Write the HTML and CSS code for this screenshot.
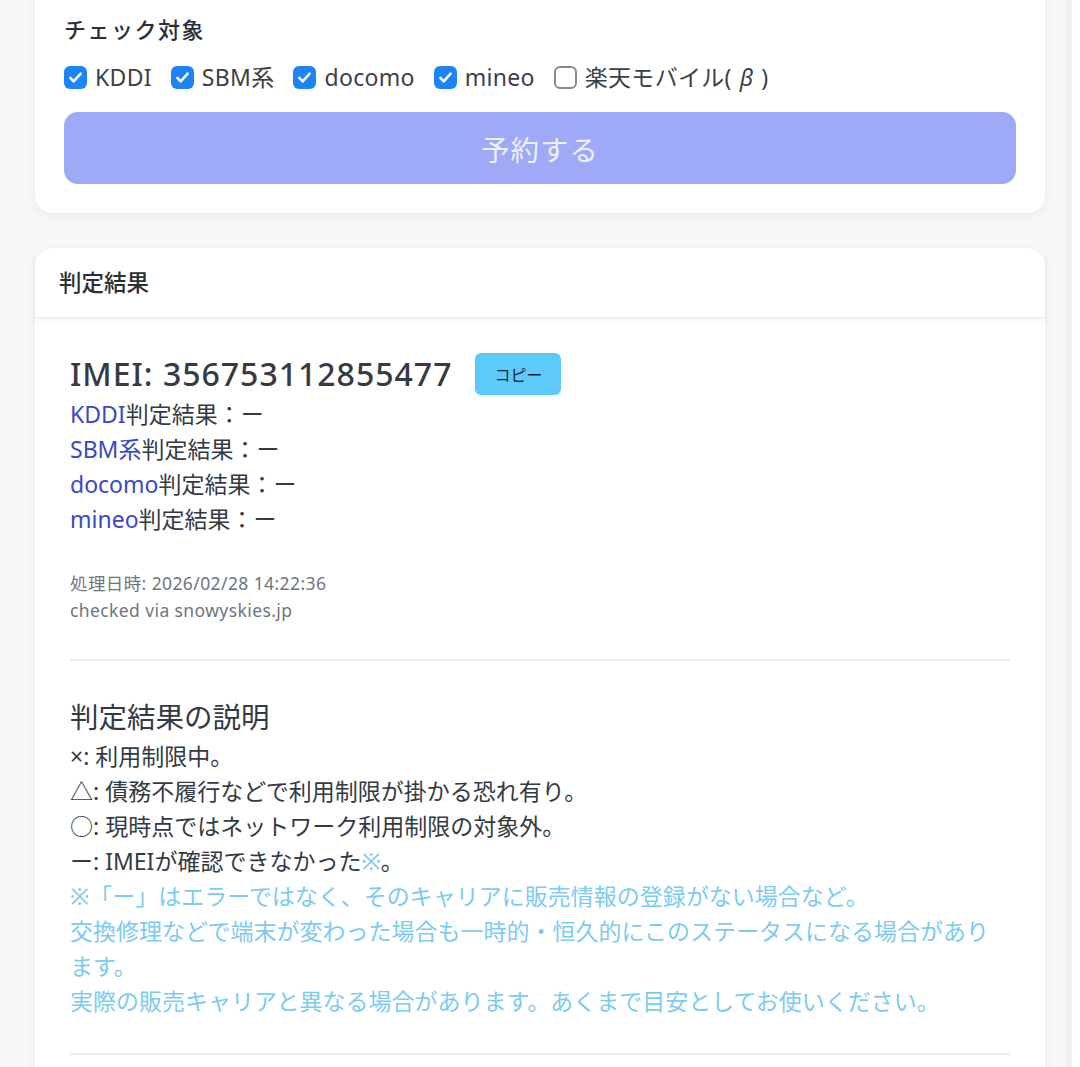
FILE: index.html
```html
<!DOCTYPE html>
<html lang="ja">
<head>
<meta charset="utf-8">
<title>判定結果</title>
<link rel="stylesheet" href="styles.css">
</head>
<body>
<div class="page">
  <section class="card card-form">
    <div class="form-label">チェック対象</div>
    <div class="checks">
      <label class="check"><span class="box on"><svg viewBox="0 0 24 24" width="19" height="19"><path d="M5.5 12.5l4.2 4.3 8.8-9.6" fill="none" stroke="#fff" stroke-width="3.2" stroke-linecap="round" stroke-linejoin="round"/></svg></span>KDDI</label>
      <label class="check"><span class="box on"><svg viewBox="0 0 24 24" width="19" height="19"><path d="M5.5 12.5l4.2 4.3 8.8-9.6" fill="none" stroke="#fff" stroke-width="3.2" stroke-linecap="round" stroke-linejoin="round"/></svg></span>SBM系</label>
      <label class="check"><span class="box on"><svg viewBox="0 0 24 24" width="19" height="19"><path d="M5.5 12.5l4.2 4.3 8.8-9.6" fill="none" stroke="#fff" stroke-width="3.2" stroke-linecap="round" stroke-linejoin="round"/></svg></span>docomo</label>
      <label class="check"><span class="box on"><svg viewBox="0 0 24 24" width="19" height="19"><path d="M5.5 12.5l4.2 4.3 8.8-9.6" fill="none" stroke="#fff" stroke-width="3.2" stroke-linecap="round" stroke-linejoin="round"/></svg></span>mineo</label>
      <label class="check"><span class="box off"></span>楽天モバイル(<i class="beta">β</i>)</label>
    </div>
    <button class="submit" type="button">予約する</button>
  </section>

  <section class="card card-result">
    <header class="card-header">判定結果</header>
    <div class="card-body">
      <div class="imei-row">
        <span class="imei">IMEI: 356753112855477</span>
        <button class="copy" type="button">コピー</button>
      </div>
      <div class="result"><a class="carrier">KDDI</a>判定結果：ー</div>
      <div class="result"><a class="carrier">SBM系</a>判定結果：ー</div>
      <div class="result"><a class="carrier">docomo</a>判定結果：ー</div>
      <div class="result"><a class="carrier">mineo</a>判定結果：ー</div>
      <div class="meta">
        <div>処理日時: 2026/02/28 14:22:36</div>
        <div>checked via snowyskies.jp</div>
      </div>
      <hr class="divider">
      <h2 class="explain-title">判定結果の説明</h2>
      <div class="explain">
        <div>×: 利用制限中。</div>
        <div>△: 債務不履行などで利用制限が掛かる恐れ有り。</div>
        <div>○: 現時点ではネットワーク利用制限の対象外。</div>
        <div>ー: IMEIが確認できなかった<span class="note">※</span>。</div>
        <div class="note">※「ー」はエラーではなく、そのキャリアに販売情報の登録がない場合など。</div>
        <div class="note">交換修理などで端末が変わった場合も一時的・恒久的にこのステータスになる場合があります。</div>
        <div class="note">実際の販売キャリアと異なる場合があります。あくまで目安としてお使いください。</div>
      </div>
      <hr class="divider divider-end">
    </div>
  </section>
</div>
</body>
</html>
```

FILE: styles.css
```css
* { box-sizing: border-box; }
html, body {
  margin: 0;
  padding: 0;
  background: #ffffff;
  height: 100%;
  overflow: hidden;
}
body {
  font-family: "Noto Sans", "Noto Sans CJK JP", sans-serif;
  color: #333a44;
  font-size: 23px;
  line-height: 1.5;
}
.page {
  width: 1072px;
  min-height: 1067px;
  background: #f7f7f8;
  padding: 0 27px 0 35px;
  border-right: 6px solid #f1f1f2;
}
.card {
  width: 1010px;
  background: #fff;
  border-radius: 18px;
  box-shadow: 0 2px 10px rgba(0, 0, 0, 0.06);
}
.card-form {
  margin-top: -16px;
  padding: 28px 29px 29px;
}
.form-label {
  font-weight: 500;
  font-size: 22px;
  color: #2b2f36;
  line-height: 35px;
  letter-spacing: 1.5px;
}
.checks {
  display: flex;
  align-items: center;
  gap: 19px;
  margin-top: 13px;
  line-height: 35px;
}
.check {
  display: flex;
  align-items: center;
  gap: 8px;
  color: #3a3f48;
  font-size: 23px;
  letter-spacing: 0.3px;
}
.box {
  width: 23px;
  height: 23px;
  border-radius: 6px;
  display: flex;
  align-items: center;
  justify-content: center;
  flex: none;
}
.box.on { background: #1e84f5; }
.box.off {
  border: 2px solid #8a8a8e;
  background: #fff;
}
.beta { font-style: italic; }
.submit {
  display: block;
  width: 100%;
  height: 72px;
  margin-top: 17px;
  border: none;
  border-radius: 14px;
  background: #9ea9f8;
  color: #eef0fe;
  font-family: "Noto Sans CJK JP", sans-serif;
  font-size: 28.5px;
  letter-spacing: 1px;
}
.card-result {
  margin-top: 35px;
  border-radius: 18px 18px 0 0;
  min-height: 900px;
}
.card-header {
  height: 70px;
  padding: 1px 24px 0;
  display: flex;
  align-items: center;
  font-size: 22.5px;
  font-weight: 500;
  color: #2b2f36;
  border-bottom: 1px solid #ececee;
  box-shadow: 0 3px 6px rgba(0, 0, 0, 0.05);
  position: relative;
}
.card-body {
  padding: 33px 35px 0;
}
.imei-row {
  display: flex;
  align-items: center;
  gap: 23px;
  height: 46px;
}
.imei {
  font-size: 32px;
  font-weight: 500;
  color: #353a44;
  letter-spacing: 1px;
}
.copy {
  width: 86px;
  height: 42px;
  border: none;
  border-radius: 6px;
  background: #5ccbfa;
  color: #1d2430;
  font-family: "Noto Sans CJK JP", sans-serif;
  font-size: 16px;
}
.result {
  line-height: 35px;
  color: #333a44;
}
.carrier {
  color: #3a47c8;
}
.meta {
  margin-top: 33px;
  font-size: 17.5px;
  line-height: 27px;
  color: #6e7480;
  letter-spacing: 0.4px;
}
.divider {
  border: none;
  height: 2px;
  background: #eeeeef;
  margin: 35px 0 0;
}
.divider-end {
  margin-top: 34px;
}
.explain-title {
  margin: 35px 0 0;
  font-size: 28.5px;
  font-weight: 400;
  line-height: 43px;
  color: #333a44;
}
.explain {
  margin-top: 0;
  line-height: 35px;
  color: #333a44;
}
.note {
  color: #7ccbf0;
}
```
